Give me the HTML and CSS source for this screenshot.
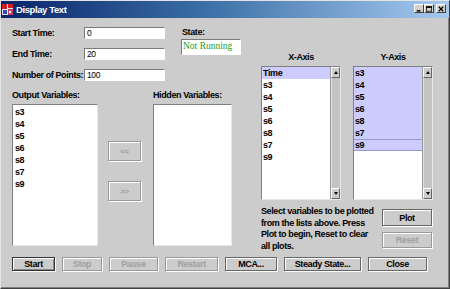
FILE: index.html
```html
<html>
<head>
    <meta charset="UTF-8">
    <title>Display Text</title>
    <link rel="stylesheet" href="styles.css">
</head>
<body>
<div class="window">
    <div class="titlebar">
        <svg class="app-icon" width="11" height="11" viewBox="0 0 11 11">
            <rect x="0" y="0" width="11" height="11" fill="#e8e8f0"/>
            <rect x="0" y="0" width="5" height="5" fill="#d02020"/>
            <rect x="6" y="0" width="5" height="4" fill="#d02020"/>
            <rect x="1" y="6" width="4" height="4" fill="#3050b0"/>
            <rect x="6" y="5" width="5" height="6" fill="#c04060"/>
            <rect x="7" y="7" width="2" height="2" fill="#ffffff"/>
        </svg>
        <span class="title">Display Text</span>
        <div class="controls">
            <span class="ctl">
                <svg width="8" height="7" viewBox="0 0 8 7"><rect x="1" y="5" width="5" height="2" fill="#000"/></svg>
            </span>
            <span class="ctl">
                <svg width="8" height="7" viewBox="0 0 8 7"><rect x="0.5" y="0.5" width="7" height="6" fill="none" stroke="#000"/><rect x="0" y="0" width="8" height="2" fill="#000"/></svg>
            </span>
            <span class="ctl close">
                <svg width="8" height="7" viewBox="0 0 8 7"><path d="M1 0.5 L7 6.5 M7 0.5 L1 6.5" stroke="#000" stroke-width="1.6"/></svg>
            </span>
        </div>
    </div>

    <div class="content">
        <div class="main">
            <div class="left">
                <div class="settings">
                    <div class="fields">
                        <label>Start Time:</label>
                        <div class="field">0</div>
                        <label>End Time:</label>
                        <div class="field">20</div>
                        <label>Number of Points:</label>
                        <div class="field">100</div>
                    </div>
                    <div class="state">
                        <label>State:</label>
                        <div class="state-field">Not Running</div>
                    </div>
                </div>

                <div class="vars">
                    <div class="var-col output">
                        <label>Output Variables:</label>
                        <ul class="list">
                            <li>s3</li>
                            <li>s4</li>
                            <li>s5</li>
                            <li>s6</li>
                            <li>s8</li>
                            <li>s7</li>
                            <li>s9</li>
                        </ul>
                    </div>
                    <div class="movers">
                        <button class="btn" disabled>&lt;&lt;</button>
                        <button class="btn" disabled>&gt;&gt;</button>
                    </div>
                    <div class="var-col hidden">
                        <label>Hidden Variables:</label>
                        <ul class="list"></ul>
                    </div>
                </div>
            </div>

            <div class="right">
                <div class="axes">
                    <div class="axis">
                        <div class="axis-label">X-Axis</div>
                        <div class="scroll-list">
                            <ul class="items">
                                <li class="selected">Time</li>
                                <li>s3</li>
                                <li>s4</li>
                                <li>s5</li>
                                <li>s6</li>
                                <li>s8</li>
                                <li>s7</li>
                                <li>s9</li>
                            </ul>
                            <div class="scrollbar">
                                <span class="arrow up"></span>
                                <span class="track"></span>
                                <span class="arrow down"></span>
                            </div>
                        </div>
                    </div>
                    <div class="axis">
                        <div class="axis-label">Y-Axis</div>
                        <div class="scroll-list">
                            <ul class="items">
                                <li class="selected">s3</li>
                                <li class="selected">s4</li>
                                <li class="selected">s5</li>
                                <li class="selected">s6</li>
                                <li class="selected">s8</li>
                                <li class="selected">s7</li>
                                <li class="selected focus">s9</li>
                            </ul>
                            <div class="scrollbar">
                                <span class="arrow up"></span>
                                <span class="track"></span>
                                <span class="arrow down"></span>
                            </div>
                        </div>
                    </div>
                </div>

                <div class="plot-row">
                    <p class="hint">Select variables to be plotted<br>from the lists above. Press<br>Plot to begin, Reset to clear<br>all plots.</p>
                    <div class="plot-buttons">
                        <button class="btn plot">Plot</button>
                        <button class="btn reset" disabled>Reset</button>
                    </div>
                </div>
            </div>
        </div>

        <div class="actions">
            <button class="btn default start">Start</button>
            <button class="btn stop" disabled>Stop</button>
            <button class="btn pause" disabled>Pause</button>
            <button class="btn restart" disabled>Restart</button>
            <button class="btn mca">MCA...</button>
            <button class="btn steady">Steady State...</button>
            <button class="btn close-btn">Close</button>
        </div>
    </div>
</div>
</body>
</html>
```

FILE: styles.css
```css
* {
    box-sizing: border-box;
}

body {
    margin: 0;
    font-family: "Liberation Sans", Arial, sans-serif;
    font-size: 9px;
    font-weight: bold;
    letter-spacing: -0.4px;
    color: #000;
}

label {
    white-space: nowrap;
}

.window {
    width: 450px;
    height: 289px;
    background-color: #cccccc;
    border: 1px solid;
    border-color: #e4e4e4 #404040 #404040 #e4e4e4;
    box-shadow: inset -1px -1px #808080;
    display: flex;
    flex-direction: column;
}

/* title bar */
.titlebar {
    height: 17px;
    display: flex;
    align-items: center;
    padding-left: 1px;
    background: linear-gradient(to right, #0a246a, #3a6ea5 45%, #a6caf0);
    color: #fff;
}

.app-icon {
    margin-right: 3px;
}

.title {
    font-size: 9.5px;
}

.controls {
    margin-left: auto;
    display: flex;
    padding-right: 3px;
    margin-top: -2px;
}

.ctl {
    width: 10px;
    height: 9px;
    background: #d4d0c8;
    border: 1px solid;
    border-color: #fff #404040 #404040 #fff;
    display: flex;
    align-items: center;
    justify-content: center;
}

.ctl svg {
    width: 6px;
    height: 6px;
}

.ctl.close {
    margin-left: 2px;
}

/* body */
.content {
    padding: 9px 0 0 11px;
}

.main {
    display: flex;
    height: 230px;
}

.left {
    width: 232px;
}

.settings {
    display: flex;
}

.fields {
    display: grid;
    grid-template-columns: 72px 81px;
    grid-auto-rows: 12px;
    row-gap: 9px;
    align-items: center;
}

.field {
    height: 12px;
    background: #fff;
    border: 1px solid;
    border-color: #7a7a7a #fff #fff #7a7a7a;
    font-weight: normal;
    font-size: 8.5px;
    line-height: 10px;
    padding-left: 2px;
}

.state {
    margin-left: 16px;
    display: flex;
    flex-direction: column;
}

.state label {
    height: 12px;
    line-height: 10px;
    padding-left: 1px;
}

.state-field {
    width: 60px;
    height: 16px;
    background: #fff;
    border: 1px solid;
    border-color: #7a7a7a #fff #fff #7a7a7a;
    font-family: "Liberation Serif", "Times New Roman", serif;
    font-weight: normal;
    font-size: 9.5px;
    letter-spacing: 0;
    color: #22a022;
    line-height: 13px;
    padding-left: 1px;
}

.vars {
    display: flex;
    margin-top: 8px;
}

.var-col {
    display: flex;
    flex-direction: column;
}

.var-col label {
    height: 15px;
    line-height: 12px;
}

.output {
    width: 86px;
}

.hidden {
    width: 79px;
}

.list {
    margin: 0;
    padding: 1px 0 0 1px;
    list-style: none;
    height: 142px;
    background: #fff;
    border: 1px solid;
    border-color: #808080 #e8e8e8 #e8e8e8 #808080;
}

.list li,
.items li {
    height: 12px;
    line-height: 12px;
    padding-left: 1px;
}

.movers {
    width: 55px;
    padding: 52px 0 0 10px;
    display: flex;
    flex-direction: column;
    gap: 20px;
}

.movers .btn {
    width: 33px;
    height: 20px;
    font-size: 8px;
}

/* axes */
.right {
    margin-left: 17px;
    width: 172px;
}

.axes {
    display: flex;
    gap: 12px;
    margin-top: 24px;
}

.axis {
    width: 80px;
}

.axis-label {
    height: 15px;
    line-height: 12px;
    text-align: center;
}

.scroll-list {
    height: 134px;
    display: flex;
    background: #fff;
    border: 1px solid;
    border-color: #808080 #e8e8e8 #e8e8e8 #808080;
}

.items {
    flex: 1;
    margin: 0;
    padding: 0;
    list-style: none;
}

.items li.selected {
    background: #ccccff;
}

.items li.focus {
    border-top: 1px solid #9999cc;
    border-bottom: 1px solid #9999cc;
    line-height: 10px;
}

.scrollbar {
    width: 10px;
    display: flex;
    flex-direction: column;
    background: #c4c4c4;
    border-left: 1px solid #999;
}

.track {
    flex: 1;
    border-left: 1px solid #e0e0e0;
}

.arrow {
    height: 11px;
    background: #cccccc;
    border: 1px solid;
    border-color: #fff #666 #666 #fff;
    position: relative;
}

.arrow::after {
    content: "";
    position: absolute;
    left: 2px;
    top: 3px;
    border-left: 2.5px solid transparent;
    border-right: 2.5px solid transparent;
}

.arrow.up::after {
    border-bottom: 3px solid #000;
}

.arrow.down::after {
    border-top: 3px solid #000;
}

.plot-row {
    display: flex;
    margin-top: 6px;
}

.hint {
    width: 121px;
    margin: 0;
    line-height: 11.5px;
    white-space: nowrap;
}

.plot-buttons {
    display: flex;
    flex-direction: column;
    padding-top: 3px;
    gap: 6px;
}

.plot {
    width: 50px;
    height: 17px;
}

.reset {
    width: 50px;
    height: 16px;
}

/* buttons */
.btn {
    font-family: inherit;
    font-size: 9px;
    font-weight: bold;
    letter-spacing: -0.4px;
    color: #000;
    background: #cccccc;
    border: 1px solid #666;
    box-shadow: inset 1px 1px #fff, 1px 1px #fff;
    padding: 0;
    margin: 0;
}

.btn:disabled {
    color: #a0a0a0;
    border-color: #999;
}

.btn.default {
    border-color: #333;
    box-shadow: inset 1px 1px #fff, inset -1px -1px #888, 1px 1px #fff;
}

.actions {
    display: flex;
    gap: 7px;
}

.actions .btn {
    height: 14px;
}

.start { width: 43px; }
.stop { width: 40px; }
.pause { width: 49px; }
.restart { width: 53px; }
.mca { width: 52px; }
.steady { width: 77px; }
.close-btn { width: 59px; }
```
